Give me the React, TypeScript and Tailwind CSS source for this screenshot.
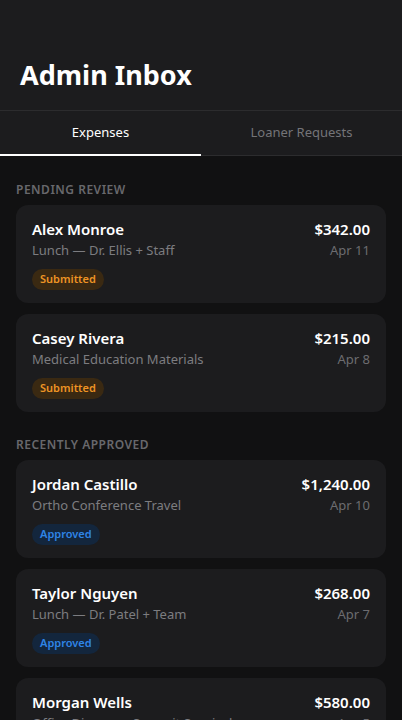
import { useState } from 'react';

type Status = 'Submitted' | 'Approved';

interface Expense {
  name: string;
  detail: string;
  amount: string;
  date: string;
  status: Status;
}

const pending: Expense[] = [
  { name: 'Alex Monroe', detail: 'Lunch — Dr. Ellis + Staff', amount: '$342.00', date: 'Apr 11', status: 'Submitted' },
  { name: 'Casey Rivera', detail: 'Medical Education Materials', amount: '$215.00', date: 'Apr 8', status: 'Submitted' },
];

const approved: Expense[] = [
  { name: 'Jordan Castillo', detail: 'Ortho Conference Travel', amount: '$1,240.00', date: 'Apr 10', status: 'Approved' },
  { name: 'Taylor Nguyen', detail: 'Lunch — Dr. Patel + Team', amount: '$268.00', date: 'Apr 7', status: 'Approved' },
  { name: 'Morgan Wells', detail: 'Office Dinner — Summit Surgical', amount: '$580.00', date: 'Apr 5', status: 'Approved' },
];

function ExpenseCard({ item }: { item: Expense }) {
  const badge =
    item.status === 'Submitted'
      ? 'bg-[#3a2912] text-[#ee9424]'
      : 'bg-[#13263d] text-[#2f84e6]';
  return (
    <div className="bg-[#1c1c1e] rounded-[12px] px-4 pt-[13px] pb-[13px]">
      <div className="flex justify-between">
        <div className="min-w-0">
          <p className="text-[15px] leading-[22px] font-semibold text-white">{item.name}</p>
          <p className="text-[13px] leading-[20px] text-[#7c7c80]">{item.detail}</p>
        </div>
        <div className="text-right shrink-0">
          <p className="text-[15px] leading-[22px] font-semibold text-white">{item.amount}</p>
          <p className="text-[13px] leading-[20px] text-[#6c6c70]">{item.date}</p>
        </div>
      </div>
      <span className={`mt-[9px] inline-flex items-center h-[21px] px-2 rounded-full text-[11px] font-semibold ${badge}`}>
        {item.status}
      </span>
    </div>
  );
}

function Section({ title, items }: { title: string; items: Expense[] }) {
  return (
    <section>
      <h2 className="text-[12px] leading-[16px] font-semibold tracking-[0.5px] text-[#68686c] mb-[7px]">{title}</h2>
      <div className="flex flex-col gap-[11px]">
        {items.map((e) => (
          <ExpenseCard key={e.name} item={e} />
        ))}
      </div>
    </section>
  );
}

export default function App() {
  const [tab, setTab] = useState<'expenses' | 'loaners'>('expenses');

  return (
    <div className="min-h-screen bg-[#111112] font-['Noto_Sans',sans-serif]">
      <header className="bg-[#1c1c1e]">
        <div className="px-5 pt-[58px] pb-[18px] border-b border-[#2c2c2e]">
          <h1 className="text-[27px] leading-[34px] font-bold text-white">Admin Inbox</h1>
        </div>
        <div className="flex border-b border-[#2c2c2e]">
          <button
            onClick={() => setTab('expenses')}
            className={`relative flex-1 h-[44px] text-[13px] ${tab === 'expenses' ? 'text-white' : 'text-[#747478]'}`}
          >
            Expenses
            {tab === 'expenses' && <span className="absolute left-0 right-0 -bottom-px h-[2px] bg-white" />}
          </button>
          <button
            onClick={() => setTab('loaners')}
            className={`relative flex-1 h-[44px] text-[13px] ${tab === 'loaners' ? 'text-white' : 'text-[#747478]'}`}
          >
            Loaner Requests
            {tab === 'loaners' && <span className="absolute left-0 right-0 -bottom-px h-[2px] bg-white" />}
          </button>
        </div>
      </header>

      <main className="px-4 pt-[26px] pb-8 flex flex-col gap-[25px]">
        <Section title="PENDING REVIEW" items={pending} />
        <Section title="RECENTLY APPROVED" items={approved} />
      </main>
    </div>
  );
}
